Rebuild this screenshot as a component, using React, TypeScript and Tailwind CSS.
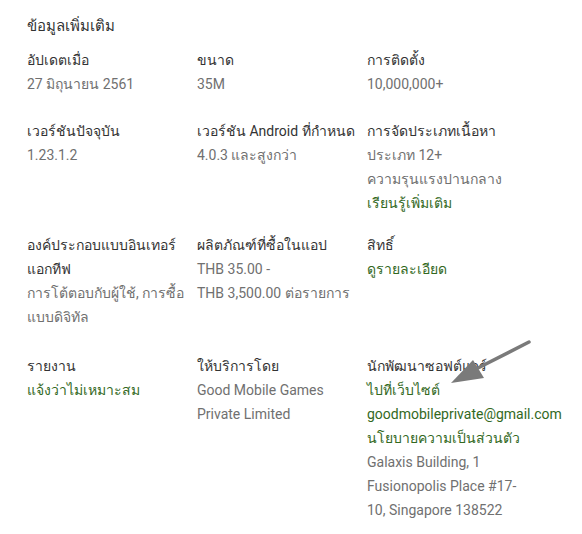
import type { ReactNode } from "react";

type Item = {
  label: string[];
  lines: ReactNode[];
};

const Link = ({ children, bold = true }: { children: ReactNode; bold?: boolean }) => (
  <span className={`text-[#33691e] ${bold ? "font-medium" : ""}`}>{children}</span>
);

const rows: { mt: string; items: Item[] }[] = [
  {
    mt: "mt-[10px]",
    items: [
      { label: ["อัปเดตเมื่อ"], lines: ["27 มิถุนายน 2561"] },
      { label: ["ขนาด"], lines: ["35M"] },
      { label: ["การติดตั้ง"], lines: ["10,000,000+"] },
    ],
  },
  {
    mt: "mt-[23px]",
    items: [
      { label: ["เวอร์ชันปัจจุบัน"], lines: ["1.23.1.2"] },
      { label: ["เวอร์ชัน Android ที่กำหนด"], lines: ["4.0.3 และสูงกว่า"] },
      {
        label: ["การจัดประเภทเนื้อหา"],
        lines: ["ประเภท 12+", "ความรุนแรงปานกลาง", <Link key="l">เรียนรู้เพิ่มเติม</Link>],
      },
    ],
  },
  {
    mt: "mt-[18px]",
    items: [
      {
        label: ["องค์ประกอบแบบอินเทอร์", "แอกทีฟ"],
        lines: ["การโต้ตอบกับผู้ใช้, การซื้อ", "แบบดิจิทัล"],
      },
      { label: ["ผลิตภัณฑ์ที่ซื้อในแอป"], lines: ["THB 35.00 -", "THB 3,500.00 ต่อรายการ"] },
      { label: ["สิทธิ์"], lines: [<Link key="d">ดูรายละเอียด</Link>] },
    ],
  },
  {
    mt: "mt-[25px]",
    items: [
      { label: ["รายงาน"], lines: [<Link key="r">แจ้งว่าไม่เหมาะสม</Link>] },
      { label: ["ให้บริการโดย"], lines: ["Good Mobile Games", "Private Limited"] },
      {
        label: ["นักพัฒนาซอฟต์แวร์"],
        lines: [
          <Link key="w">ไปที่เว็บไซต์</Link>,
          <Link key="e" bold={false}>goodmobileprivate@gmail.com</Link>,
          <Link key="p">นโยบายความเป็นส่วนตัว</Link>,
          "Galaxis Building, 1",
          "Fusionopolis Place #17-",
          "10, Singapore 138522",
        ],
      },
    ],
  },
];

export default function App() {
  return (
    <div className="relative w-[582px] h-[534px] bg-white pl-[27px] pt-[14px] font-['Roboto','Noto_Sans','DejaVu_Sans',sans-serif] text-[14px] leading-[24px] whitespace-nowrap">
      <h2 className="text-[15px] text-[#333]">ข้อมูลเพิ่มเติม</h2>
      {rows.map((row, ri) => (
        <div key={ri} className={`grid grid-cols-[170px_170px_190px] ${row.mt}`}>
          {row.items.map((item, ii) => (
            <div key={ii}>
              {item.label.map((l, li) => (
                <div key={li} className="text-[#333]">
                  {l}
                </div>
              ))}
              {item.lines.map((line, li) => (
                <div key={li} className="text-[#707070]">
                  {line}
                </div>
              ))}
            </div>
          ))}
        </div>
      ))}
      <svg className="absolute left-0 top-0 pointer-events-none" width="582" height="534">
        <line x1="529" y1="342" x2="472" y2="371" stroke="#7a7a7a" strokeWidth="3.5" strokeLinecap="round" />
        <polygon points="451,383 473,360 484,378" fill="#7a7a7a" />
      </svg>
    </div>
  );
}
